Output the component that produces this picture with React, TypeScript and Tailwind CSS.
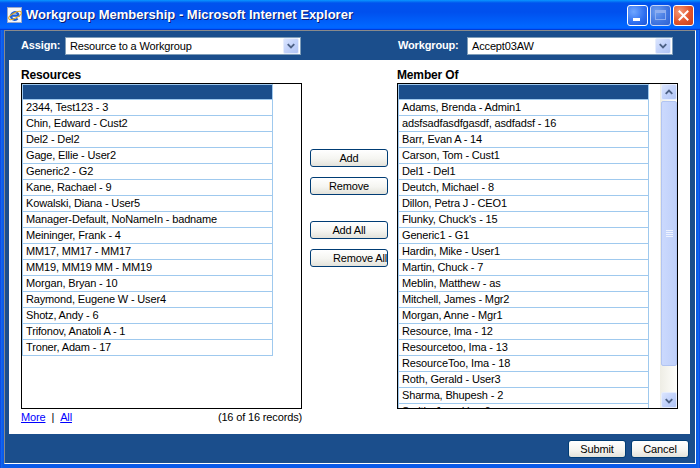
import React from 'react';

const resources = [
  '2344, Test123 - 3',
  'Chin, Edward - Cust2',
  'Del2 - Del2',
  'Gage, Ellie - User2',
  'Generic2 - G2',
  'Kane, Rachael - 9',
  'Kowalski, Diana - User5',
  'Manager-Default, NoNameIn - badname',
  'Meininger, Frank - 4',
  'MM17, MM17 - MM17',
  'MM19, MM19 MM - MM19',
  'Morgan, Bryan - 10',
  'Raymond, Eugene W - User4',
  'Shotz, Andy - 6',
  'Trifonov, Anatoli A - 1',
  'Troner, Adam - 17',
];

const members = [
  'Adams, Brenda - Admin1',
  'adsfsadfasdfgasdf, asdfadsf - 16',
  'Barr, Evan A - 14',
  'Carson, Tom - Cust1',
  'Del1 - Del1',
  'Deutch, Michael - 8',
  'Dillon, Petra J - CEO1',
  "Flunky, Chuck's - 15",
  'Generic1 - G1',
  'Hardin, Mike - User1',
  'Martin, Chuck - 7',
  'Meblin, Matthew - as',
  'Mitchell, James - Mgr2',
  'Morgan, Anne - Mgr1',
  'Resource, Ima - 12',
  'Resourcetoo, Ima - 13',
  'ResourceToo, Ima - 18',
  'Roth, Gerald - User3',
  'Sharma, Bhupesh - 2',
  'Smith, Jon - User6',
];

const Chevron = ({ up }: { up?: boolean }) => (
  <svg width="15" height="15" viewBox="0 0 15 15">
    <path d={up ? 'M4 9 L7.5 5.5 L11 9' : 'M4 6 L7.5 9.5 L11 6'} stroke="#4d6185" strokeWidth="2" fill="none" />
  </svg>
);

const ArrowBox = ({ up }: { up?: boolean }) => (
  <div className="w-[16px] h-[16px] flex items-center justify-center rounded-[2px] border border-[#e6edfd] bg-[linear-gradient(135deg,#dbe5fe_0%,#c3d3fb_50%,#b1c5f5_100%)]">
    <Chevron up={up} />
  </div>
);

const Select = ({ value, w }: { value: string; w: string }) => (
  <div className={`${w} h-[18px] border border-[#7f9db9] bg-white flex items-center`}>
    <span className="flex-1 pl-[4px] text-[11px] leading-[16px] text-black">{value}</span>
    <div className="mr-[1px]">
      <ArrowBox />
    </div>
  </div>
);

const XpButton = ({ label, className }: { label: React.ReactNode; className: string }) => (
  <button className={`${className} h-[18px] rounded-[3px] border border-[#003c74] bg-[linear-gradient(180deg,#ffffff_0%,#f5f5f1_55%,#e3e2da_100%)] text-[11px] leading-[16px] text-black overflow-hidden whitespace-nowrap`}>
    {label}
  </button>
);

const ListRows = ({ items }: { items: string[] }) => (
  <div className="w-[251px] border-l border-r border-[#9fc9ee]">
    <div className="h-[16px] bg-[#1b4e8c] border-t border-b border-[#9fc9ee]"></div>
    {items.map((r, i) => (
      <div key={i} className="h-[16px] border-b border-[#9fc9ee] pl-[3px] text-[11px] leading-[15px] text-black whitespace-nowrap">
        {r}
      </div>
    ))}
  </div>
);

export default function App() {
  return (
    <div className="w-[700px] h-[468px] flex flex-col overflow-hidden bg-[#0a4fe0] font-['Liberation_Sans',Arial,sans-serif] tracking-[-0.15px]">
      {/* Title bar */}
      <div className="h-[30px] flex items-center pl-[7px] pr-[6px] bg-[linear-gradient(180deg,#0997ff_0%,#0053ee_10%,#0050ee_40%,#0066ff_86%,#0066ff_92%,#005bff_95%,#003dd7_97%,#003dd7_100%)]">
        <svg width="16" height="16" viewBox="0 0 16 16">
          <rect x="0.5" y="0.5" width="14" height="15" fill="#f4f6fb" stroke="#9aa8c8" />
          <path d="M4 8.6 H11.6 A3.8 3.8 0 1 0 10.6 11.6" stroke="#1c5fd6" strokeWidth="2.2" fill="none" />
          <ellipse cx="8" cy="8.5" rx="7" ry="2.6" transform="rotate(-28 8 8.5)" stroke="#e8a71c" strokeWidth="1" fill="none" />
        </svg>
        <span className="ml-[3px] text-white text-[13px] font-bold tracking-normal [text-shadow:1px_1px_#0a1a6e]">
          Workgroup Membership - Microsoft Internet Explorer
        </span>
        <div className="ml-auto flex gap-[2px]">
          <div className="w-[21px] h-[21px] rounded-[3px] border border-white bg-[radial-gradient(circle_at_30%_30%,#6fa6ff_0%,#2d6ef0_60%,#1f55d6_100%)] flex items-end pl-[5px] pb-[4px]">
            <div className="w-[7px] h-[3px] bg-white"></div>
          </div>
          <div className="w-[21px] h-[21px] rounded-[3px] border border-[#c8d6f6] bg-[radial-gradient(circle_at_30%_30%,#6f9ff0_0%,#3f74e0_60%,#2f62d2_100%)] flex items-center justify-center">
            <div className="w-[11px] h-[10px] border border-t-[3px] border-[#8eaef0]"></div>
          </div>
          <div className="w-[21px] h-[21px] rounded-[3px] border border-white bg-[radial-gradient(circle_at_30%_30%,#f49a78_0%,#e2542c_55%,#c8401c_100%)] flex items-center justify-center">
            <svg width="11" height="11" viewBox="0 0 11 11">
              <path d="M1.5 1.5 L9.5 9.5 M9.5 1.5 L1.5 9.5" stroke="white" strokeWidth="2" strokeLinecap="square" />
            </svg>
          </div>
        </div>
      </div>

      {/* Body */}
      <div className="flex-1 flex px-[4px] pb-[4px] bg-[linear-gradient(90deg,#0831d9_0px,#166aee_1px,#0a5ae8_3px,#0a5ae8_calc(100%-3px),#166aee_calc(100%-1px),#0831d9_100%)]">
        <div className="flex-1 flex flex-col bg-[#1b4e8c] border border-l-[#8a8a8a] border-t-[#8a8a8a] border-r-white border-b-white">
          {/* Assign row */}
          <div className="h-[29px] flex items-center">
            <div className="w-[393px] pl-[16px] flex items-center">
              <span className="w-[44px] text-white text-[11px] font-bold">Assign:</span>
              <Select value="Resource to a Workgroup" w="w-[236px]" />
            </div>
            <div className="flex items-center">
              <span className="w-[69px] text-white text-[11px] font-bold">Workgroup:</span>
              <Select value="Accept03AW" w="w-[206px]" />
            </div>
          </div>

          {/* White panel */}
          <div className="h-[374px] ml-[4px] mr-[5px] bg-white flex pl-[12px] pt-[8px]">
            {/* Resources */}
            <div className="w-[281px] flex flex-col">
              <div className="h-[14px] leading-[14px] text-[12px] font-bold text-black">Resources</div>
              <div className="mt-[1px] h-[326px] border border-black overflow-hidden">
                <ListRows items={resources} />
              </div>
              <div className="h-[16px] leading-[16px] flex text-[11px] text-black">
                <span className="text-[#0000ff] underline">More</span>
                <span className="mx-[6px]">|</span>
                <span className="text-[#0000ff] underline">All</span>
                <span className="ml-auto">(16 of 16 records)</span>
              </div>
            </div>

            {/* Buttons */}
            <div className="ml-[8px] w-[78px] flex flex-col pt-[81px]">
              <XpButton label="Add" className="w-full" />
              <XpButton label="Remove" className="w-full mt-[10px]" />
              <XpButton label="Add All" className="w-full mt-[26px]" />
              <XpButton label={<span className="block pl-[22px] text-left">Remove All</span>} className="w-full mt-[10px]" />
            </div>

            {/* Member Of */}
            <div className="ml-[9px] w-[281px] flex flex-col">
              <div className="h-[14px] leading-[14px] text-[12px] font-bold text-black">Member Of</div>
              <div className="mt-[1px] h-[326px] border border-black flex overflow-hidden">
                <div className="h-[324px] overflow-hidden">
                  <ListRows items={members} />
                </div>
                <div className="flex-1"></div>
                <div className="w-[17px] h-[324px] flex flex-col pl-[1px] bg-[linear-gradient(90deg,#eeede5,#fefefb)]">
                  <ArrowBox up />
                  <div className="mt-[1px] h-[265px] rounded-[2px] border border-[#b1c4f2] bg-[linear-gradient(90deg,#cbd9fd,#bfd0fa)] flex items-center justify-center">
                    <div className="flex flex-col gap-[1px]">
                      <div className="w-[7px] h-[1px] bg-[#eef3ff]"></div>
                      <div className="w-[7px] h-[1px] bg-[#eef3ff]"></div>
                      <div className="w-[7px] h-[1px] bg-[#eef3ff]"></div>
                      <div className="w-[7px] h-[1px] bg-[#eef3ff]"></div>
                    </div>
                  </div>
                  <div className="flex-1"></div>
                  <ArrowBox />
                </div>
              </div>
            </div>
          </div>

          {/* Bottom bar */}
          <div className="flex-1 flex items-center justify-end pr-[6px] gap-[5px]">
            <XpButton label="Submit" className="w-[58px]" />
            <XpButton label="Cancel" className="w-[58px]" />
          </div>
        </div>
      </div>
    </div>
  );
}
